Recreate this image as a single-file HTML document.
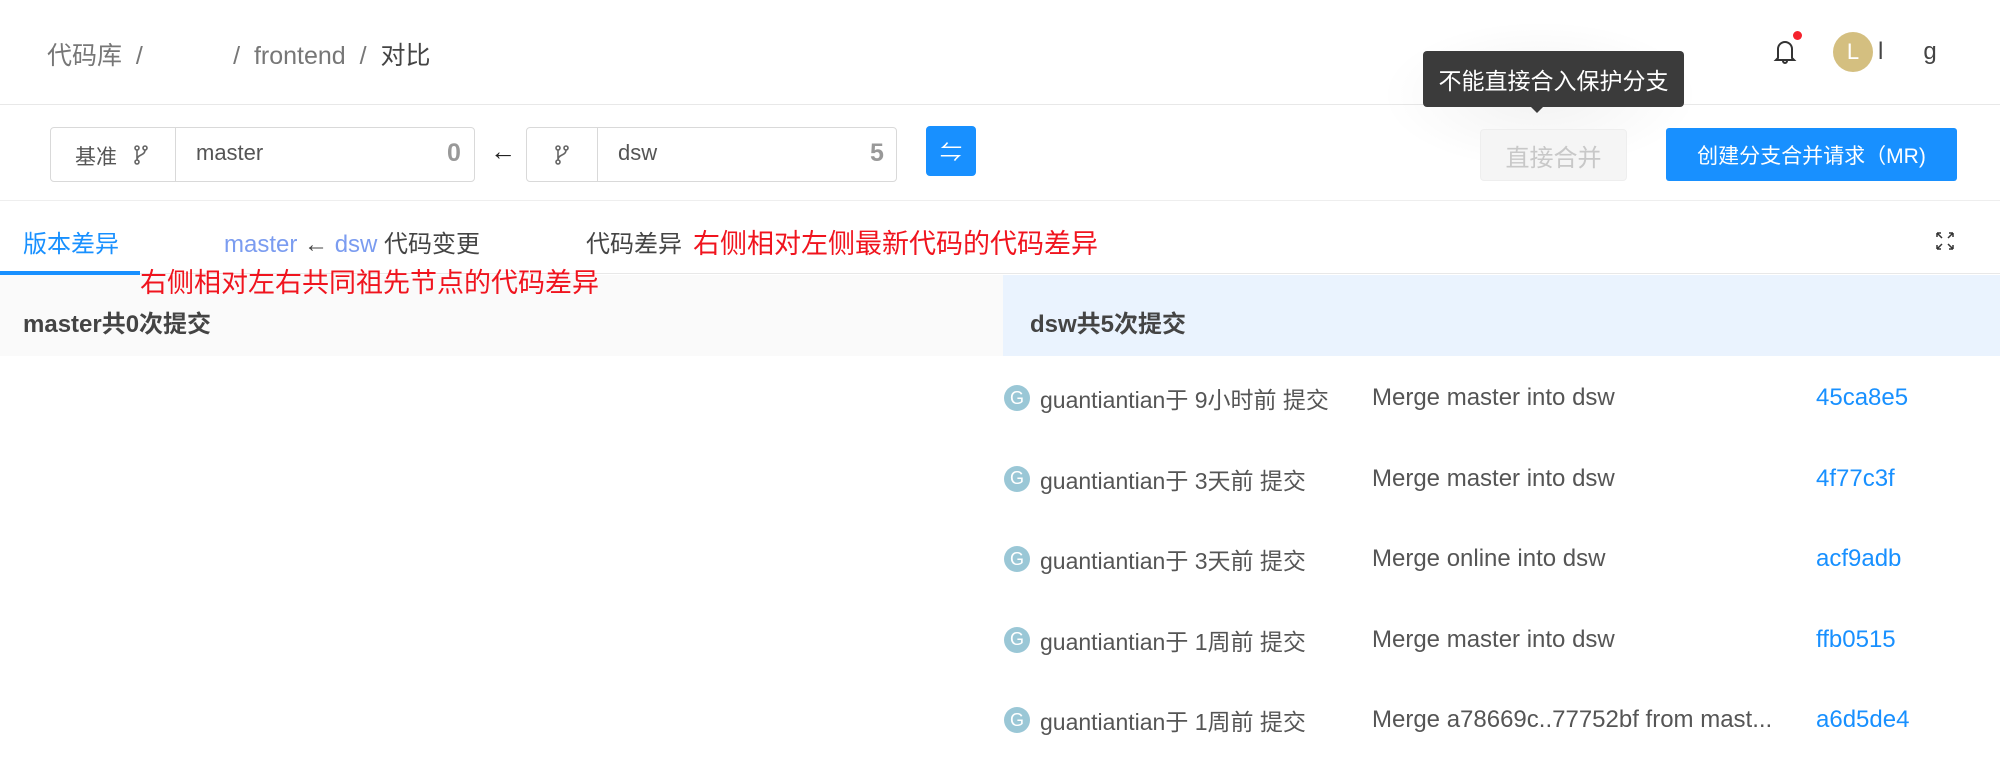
<!DOCTYPE html>
<html><head><meta charset="utf-8"><style>
*{margin:0;padding:0;box-sizing:border-box}
body{width:2000px;height:772px;overflow:hidden;background:#fff;font-family:"Liberation Sans","Noto Sans CJK SC",sans-serif;color:#555;position:relative}
.a{position:absolute;white-space:nowrap}
.box{position:absolute;border:1px solid #d9d9d9;border-radius:4px;height:55px;top:127px}
.vc{display:flex;align-items:center}
.row{height:80.5px;position:relative}
.row .a{top:0;height:80px;display:flex;align-items:center}
</style></head><body>
<div class="a" style="left:47px;top:36px;font-size:25px;color:#777">代码库&nbsp; /&nbsp;&nbsp;&nbsp;&nbsp;&nbsp;&nbsp;&nbsp;&nbsp;&nbsp;&nbsp;&nbsp;&nbsp; /&nbsp; frontend&nbsp; /&nbsp; <span style="color:#444">对比</span></div>
<div class="a" style="left:0;top:104px;width:2000px;height:1px;background:#e8e8e8"></div>
<svg class="a" style="left:1772px;top:36px" width="26" height="30" viewBox="0 0 26 30"><path d="M6 22V13a7 7 0 0 1 14 0v9l2 2H4z M11 25a2 2 0 0 0 4 0" fill="none" stroke="#333" stroke-width="2"/></svg>
<div class="a" style="left:1793px;top:31px;width:9px;height:9px;border-radius:50%;background:#f5222d"></div>
<div class="a vc" style="left:1833px;top:32px;width:40px;height:40px;border-radius:50%;background:#d4bf80;color:#fff;font-size:22px;justify-content:center">L</div>
<div class="a" style="left:1878px;top:38px;font-size:24px;color:#444">l<span style="color:#ddd">&nbsp;&nbsp;&nbsp;&nbsp;&nbsp;&nbsp;</span>g</div>
<!-- tooltip -->
<div class="a" style="left:1380px;top:20px;width:320px;height:150px;border-radius:60px;background:radial-gradient(ellipse,rgba(0,0,0,0.05),rgba(0,0,0,0) 70%)"></div>
<div class="a vc" style="left:1423px;top:51px;width:261px;height:56px;background:#3b3b3b;border-radius:4px;color:#fff;font-size:23px;justify-content:center">不能直接合入保护分支</div>
<div class="a" style="left:1531px;top:107px;border-left:6px solid transparent;border-right:6px solid transparent;border-top:6px solid #3b3b3b"></div>
<!-- toolbar -->
<div class="box vc" style="left:50px;width:425px">
<div class="a" style="left:124px;top:0;width:1px;height:53px;background:#d9d9d9"></div>
<div class="a" style="left:24px;top:13px;font-size:21px;color:#555">基准</div>
<svg class="a" style="left:82px;top:17px" width="16" height="20" viewBox="0 0 16 20"><g fill="none" stroke="#666" stroke-width="1.6"><circle cx="4" cy="3" r="2"/><circle cx="4" cy="17" r="2"/><circle cx="12" cy="3" r="2"/><path d="M4 5v10M12 5c0 6-8 4-8 10"/></g></svg>
<div class="a" style="left:145px;top:12px;font-size:22px;color:#555">master</div>
<div class="a" style="left:396px;top:11px;font-size:25px;font-weight:bold;color:#999">0</div>
</div>
<div class="a" style="left:490px;top:136px;font-size:26px;color:#222">←</div>
<div class="box" style="left:526px;width:371px">
<div class="a" style="left:70px;top:0;width:1px;height:53px;background:#d9d9d9"></div>
<svg class="a" style="left:27px;top:17px" width="16" height="20" viewBox="0 0 16 20"><g fill="none" stroke="#666" stroke-width="1.6"><circle cx="4" cy="3" r="2"/><circle cx="4" cy="17" r="2"/><circle cx="12" cy="3" r="2"/><path d="M4 5v10M12 5c0 6-8 4-8 10"/></g></svg>
<div class="a" style="left:91px;top:12px;font-size:22px;color:#555">dsw</div>
<div class="a" style="left:343px;top:11px;font-size:25px;font-weight:bold;color:#999">5</div>
</div>
<div class="a vc" style="left:926px;top:126px;width:50px;height:50px;background:#1890ff;border-radius:4px;color:#fff;font-size:22px;justify-content:center">⇋</div>
<div class="a vc" style="left:1480px;top:129px;width:147px;height:52px;background:#f5f5f5;border:1px solid #eee;border-radius:4px;color:#c8c8c8;font-size:24px;justify-content:center">直接合并</div>
<div class="a vc" style="left:1666px;top:128px;width:291px;height:53px;background:#1890ff;border-radius:3px;color:#fff;font-size:21px;justify-content:center">创建分支合并请求（MR)</div>
<div class="a" style="left:0;top:200px;width:2000px;height:1px;background:#eee"></div>
<!-- tabs -->
<div class="a" style="left:23px;top:224px;font-size:24px;color:#1890ff">版本差异</div>
<div class="a" style="left:224px;top:224px;font-size:24px;color:#444"><span style="color:#7b9cf0">master</span> ← <span style="color:#7b9cf0">dsw</span> 代码变更</div>
<div class="a" style="left:586px;top:224px;font-size:24px;color:#444">代码差异</div>
<div class="a" style="left:693px;top:222px;font-size:27px;color:#f0141e">右侧相对左侧最新代码的代码差异</div>
<svg class="a" style="left:1936px;top:232px" width="18" height="18" viewBox="0 0 18 18"><path d="M1 1l5 5M1 1v4M1 1h4M17 1l-5 5M17 1v4M17 1h-4M1 17l5-5M1 17v-4M1 17h4M17 17l-5-5M17 17v-4M17 17h-4" stroke="#333" stroke-width="1.5" fill="none"/></svg>
<div class="a" style="left:0;top:273px;width:2000px;height:1px;background:#e8e8e8"></div>
<div class="a" style="left:0;top:271px;width:140px;height:4px;background:#1890ff"></div>
<!-- panels -->
<div class="a" style="left:0;top:275px;width:1003px;height:81px;background:#fafafa"></div>
<div class="a" style="left:1003px;top:275px;width:997px;height:81px;background:#eaf3fe"></div>
<div class="a" style="left:140px;top:261px;font-size:27px;color:#f0141e">右侧相对左右共同祖先节点的代码差异</div>
<div class="a" style="left:23px;top:304px;font-size:24px;font-weight:bold;color:#444">master共0次提交</div>
<div class="a" style="left:1030px;top:304px;font-size:24px;font-weight:bold;color:#444">dsw共5次提交</div>
<div style="position:absolute;left:1003px;top:358px;font-size:23px;color:#555">
<div class="row"><div class="a" style="left:1px"><span class="vc" style="width:26px;height:26px;border-radius:50%;background:#9ac7d6;color:#fff;font-size:18px;justify-content:center">G</span></div><div class="a" style="left:37px">guantiantian于 9小时前 提交</div><div class="a" style="left:369px;font-size:24px">Merge master into dsw</div><div class="a" style="left:813px;color:#1890ff;font-size:24px">45ca8e5</div></div>
<div class="row"><div class="a" style="left:1px"><span class="vc" style="width:26px;height:26px;border-radius:50%;background:#9ac7d6;color:#fff;font-size:18px;justify-content:center">G</span></div><div class="a" style="left:37px">guantiantian于 3天前 提交</div><div class="a" style="left:369px;font-size:24px">Merge master into dsw</div><div class="a" style="left:813px;color:#1890ff;font-size:24px">4f77c3f</div></div>
<div class="row"><div class="a" style="left:1px"><span class="vc" style="width:26px;height:26px;border-radius:50%;background:#9ac7d6;color:#fff;font-size:18px;justify-content:center">G</span></div><div class="a" style="left:37px">guantiantian于 3天前 提交</div><div class="a" style="left:369px;font-size:24px">Merge online into dsw</div><div class="a" style="left:813px;color:#1890ff;font-size:24px">acf9adb</div></div>
<div class="row"><div class="a" style="left:1px"><span class="vc" style="width:26px;height:26px;border-radius:50%;background:#9ac7d6;color:#fff;font-size:18px;justify-content:center">G</span></div><div class="a" style="left:37px">guantiantian于 1周前 提交</div><div class="a" style="left:369px;font-size:24px">Merge master into dsw</div><div class="a" style="left:813px;color:#1890ff;font-size:24px">ffb0515</div></div>
<div class="row"><div class="a" style="left:1px"><span class="vc" style="width:26px;height:26px;border-radius:50%;background:#9ac7d6;color:#fff;font-size:18px;justify-content:center">G</span></div><div class="a" style="left:37px">guantiantian于 1周前 提交</div><div class="a" style="left:369px;font-size:24px">Merge a78669c..77752bf from mast...</div><div class="a" style="left:813px;color:#1890ff;font-size:24px">a6d5de4</div></div>
</div>
</body></html>
